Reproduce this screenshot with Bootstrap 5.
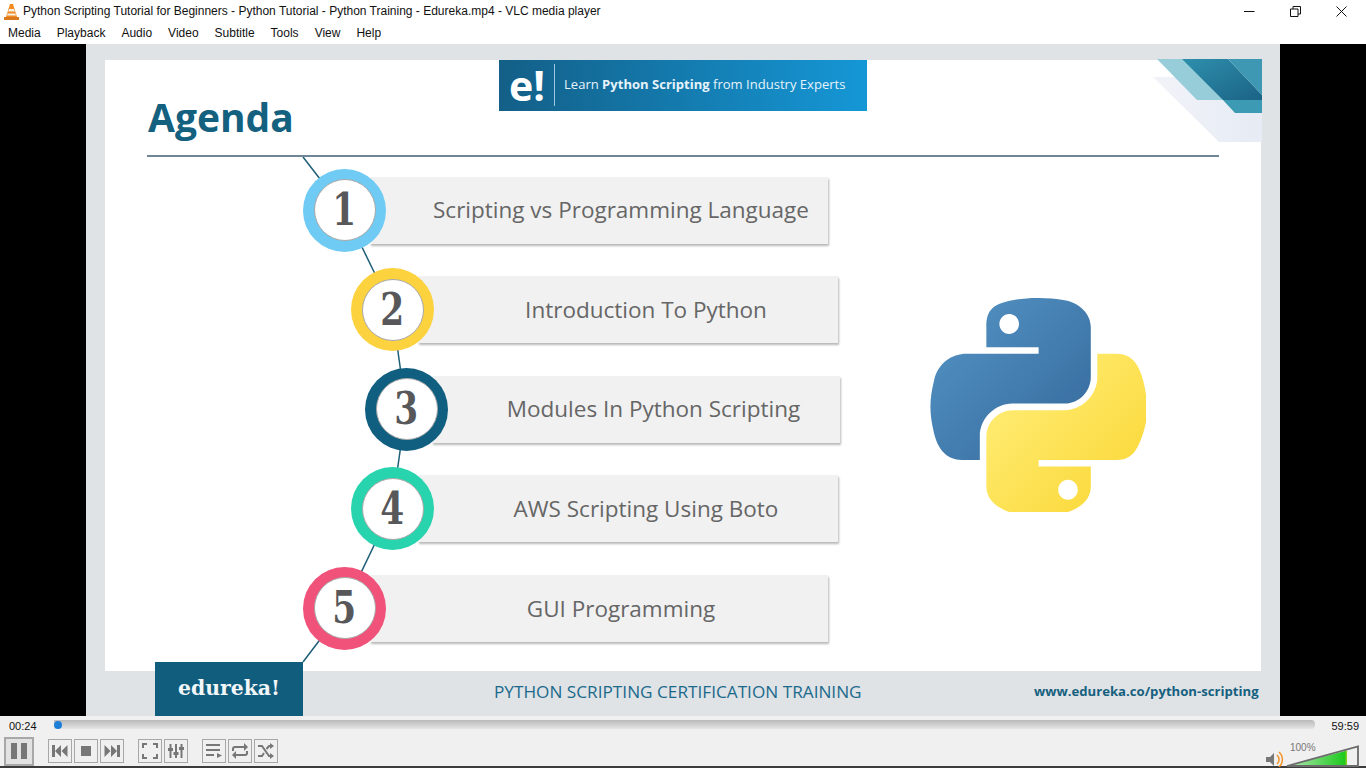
<!DOCTYPE html>
<html lang="en">
<head>
<meta charset="UTF-8">
<title>VLC media player</title>
<link href="https://cdn.jsdelivr.net/npm/bootstrap@5.3.0/dist/css/bootstrap.min.css" rel="stylesheet">
<style>
html,body{width:1366px;height:768px;overflow:hidden;background:#f0f0f0;font-family:"Open Sans",sans-serif}
.titlebar{height:23px;background:#fff;font:12px/23px "Liberation Sans",Arial,sans-serif;color:#111;padding-left:3px}
.titlebar-text{margin-left:3px}
.win-btns{gap:35px;padding-right:19px}
.menubar{height:21px;background:#fff;font:12px/21px "Liberation Sans",Arial,sans-serif;color:#111;padding-left:8px;gap:16px}
.stage{height:672px;background:#000}
.slide{margin-left:86px;width:1194px;height:672px;background:#dfe3e6;padding:16px 0 0 19px}
.paper{width:1156px;height:611px;background:#fff}
.corner{position:absolute;left:1048px;top:-1px}
.head-row{height:95px;padding-left:43px}
.agenda-title{width:351px;margin:32px 0 0;font:700 39px/50px "Open Sans",sans-serif;color:#14607f}
.promo{width:368px;height:51px;background:linear-gradient(90deg,#135f87,#1597d6);color:#fff;padding:0 0 1px 10px}
.promo-e{font:700 41px/50px "Open Sans",sans-serif;width:45px}
.promo-sep{width:1px;height:42px;background:#9cc8e0;margin-right:9px}
.promo-text{font-size:13.06px;color:#e6f3fb}
.rule{height:2px;margin:0 42px;background:#6f8696}
.links{position:absolute;left:0;top:0}
.agenda{width:735px;padding-top:11.500px;gap:16.600px}
.agenda-row{height:83px}
.at-1{margin-left:198px}
.at-2{margin-left:246px}
.at-3{margin-left:260px}
.ring{width:83px;height:83px;border-radius:50%;flex:none;z-index:2;position:relative}
.ring-1{background:#6fcbf3}
.ring-2{background:#fcd23f}
.ring-3{background:#115f80}
.ring-4{background:#27d4ae}
.ring-5{background:#f0527a}
.ring-in{width:62px;height:62px;border-radius:50%;background:#fff;border:1px solid #a8a8a8;font:700 44px/1 "DejaVu Serif",serif;color:#58585a}
.digit{display:inline-block;transform:scaleX(.78)}
.agenda-box{height:67px;margin-left:-16px;background:#f1f1f1;box-shadow:1px 2px 2px #b9b9b9;font-size:22.500px;color:#666;padding-left:44px;z-index:1;position:relative}
.w-1{width:458px}
.w-2{width:420px;padding-left:36px}
.w-3{width:410px;padding-left:35px}
.py-logo{margin:141px 0 0 90px}
.slide-foot{height:45px}
.brand{width:148px;height:54px;margin:-9px 0 0 50px;background:#115d7e;color:#f1f6f8;font:700 20.400px/1 "DejaVu Serif",serif;z-index:3;position:relative;padding-bottom:2px}
.foot-title{margin:0 0 4px 191px;font-size:17.200px;color:#1b6a8c;width:540px}
.foot-url{margin-bottom:4px;font-size:13.150px;font-weight:700;color:#15607f}
.controls{height:52px;position:relative;background:#f0f0f0;border-bottom:2px solid #3c3c3c}
.time-row{height:20px;padding:0 7px 0 9px;font:11px/1 "Liberation Sans",Arial,sans-serif;color:#111}
.seek{position:relative;margin:0 16px 3px 17px;height:9px;border-radius:0 4px 4px 0;background:linear-gradient(#b9b9b9,#e4e4e4)}
.seek-dot{position:absolute;left:0;top:1px;width:8px;height:8px;border-radius:50%;background:#1e7fd8}
.btn-row{padding-left:4px;height:30px}
.vbtn{width:24px;height:24px;padding:0;border:1px solid #a8a8a8;border-radius:0;background:#f0f0f0;display:flex;align-items:center;justify-content:center}
.vbtn-main{width:30px;height:29px;margin-right:14px;background:#e2e2e2;border-width:2px}
.tight{margin-right:2px}
.gap-after{margin-right:14px}
.vol{margin:4px 7px 0 auto;width:96px;height:24px;position:relative}
.vol-pct{position:absolute;left:27px;top:2px;font:10px/1 "Liberation Sans",Arial,sans-serif;color:#777}
</style>
</head>
<body>
<div class="titlebar d-flex align-items-center">
  <svg width="17" height="19" viewBox="0 0 17 19"><path d="M7 2h3l4 13H3z" fill="#f58a1f"/><path d="M6 7h5l.8 2.500H5.200zM4.600 11.500h7.800l.6 2H4z" fill="#f4f0ea"/><path d="M1 15h15v3H1z" fill="#d9781c"/></svg>
  <span class="titlebar-text flex-grow-1">Python Scripting Tutorial for Beginners - Python Tutorial - Python Training - Edureka.mp4 - VLC media player</span>
  <div class="d-flex align-items-center win-btns">
    <svg width="11" height="11" viewBox="0 0 11 11"><path d="M0 5.500h10.500" stroke="#111" fill="none"/></svg>
    <svg width="11" height="11" viewBox="0 0 11 11"><path d="M.5 3h7.500v7.500H.5zM3 3V.5h7.500V8H8" stroke="#111" fill="none"/></svg>
    <svg width="11" height="11" viewBox="0 0 11 11"><path d="M.5.500l10 10M10.500.500l-10 10" stroke="#111" fill="none"/></svg>
  </div>
</div>
<div class="menubar d-flex"><span>Media</span><span>Playback</span><span>Audio</span><span>Video</span><span>Subtitle</span><span>Tools</span><span>View</span><span>Help</span></div>

<div class="stage">
  <div class="slide d-flex flex-column">
    <div class="paper position-relative">
      <svg class="links" width="1156" height="611">
        <polyline points="198,97 239,150 287,249 301,349 287,448 239,548 198,602" fill="none" stroke="#1f5f78" stroke-width="1.500"/>
      </svg>
      <svg class="corner" width="110" height="84" viewBox="0 0 110 84">
        <defs>
          <linearGradient id="cornerDark" x1="0" y1="0" x2="1" y2="1"><stop offset="0" stop-color="#2e8fac"/><stop offset="1" stop-color="#1b6386"/></linearGradient>
          <linearGradient id="cornerPale" x1="0" y1="0" x2="1" y2="0"><stop offset="0" stop-color="#f1f3f8"/><stop offset="1" stop-color="#e6ebf4"/></linearGradient>
        </defs>
        <path d="M0 18H109V83H66z" fill="url(#cornerPale)"/>
        <path d="M4 0H30L78 41H44z" fill="#97cdd9"/>
        <path d="M70 41H109V54H82z" fill="#3c9ab4"/>
        <path d="M29 0H75L109 36V41H70z" fill="url(#cornerDark)"/>
        <path d="M75 0H109V36z" fill="#3f98b3"/>
      </svg>
      <div class="head-row d-flex position-relative">
        <h1 class="agenda-title">Agenda</h1>
        <div class="promo d-flex align-items-center">
          <span class="promo-e">e!</span><span class="promo-sep"></span>
          <span class="promo-text">Learn <b>Python Scripting</b> from Industry Experts</span>
        </div>
      </div>
      <div class="rule position-relative"></div>
      <div class="d-flex position-relative">
        <div class="agenda d-flex flex-column">
          <div class="agenda-row d-flex align-items-center at-1">
            <div class="ring ring-1 d-flex align-items-center justify-content-center"><div class="ring-in d-flex align-items-center justify-content-center"><span class="digit">1</span></div></div>
            <div class="agenda-box w-1 d-flex align-items-center justify-content-center">Scripting vs Programming Language</div>
          </div>
          <div class="agenda-row d-flex align-items-center at-2">
            <div class="ring ring-2 d-flex align-items-center justify-content-center"><div class="ring-in d-flex align-items-center justify-content-center"><span class="digit">2</span></div></div>
            <div class="agenda-box w-2 d-flex align-items-center justify-content-center">Introduction To Python</div>
          </div>
          <div class="agenda-row d-flex align-items-center at-3">
            <div class="ring ring-3 d-flex align-items-center justify-content-center"><div class="ring-in d-flex align-items-center justify-content-center"><span class="digit">3</span></div></div>
            <div class="agenda-box w-3 d-flex align-items-center justify-content-center">Modules In Python Scripting</div>
          </div>
          <div class="agenda-row d-flex align-items-center at-2">
            <div class="ring ring-4 d-flex align-items-center justify-content-center"><div class="ring-in d-flex align-items-center justify-content-center"><span class="digit">4</span></div></div>
            <div class="agenda-box w-2 d-flex align-items-center justify-content-center">AWS Scripting Using Boto</div>
          </div>
          <div class="agenda-row d-flex align-items-center at-1">
            <div class="ring ring-5 d-flex align-items-center justify-content-center"><div class="ring-in d-flex align-items-center justify-content-center"><span class="digit">5</span></div></div>
            <div class="agenda-box w-1 d-flex align-items-center justify-content-center">GUI Programming</div>
          </div>
        </div>
        <svg class="py-logo" width="216" height="214" viewBox="0 0 110.400 109.800">
          <defs>
            <linearGradient id="pyBlue" x1="0" y1="0" x2="1" y2="1"><stop offset="0" stop-color="#5596c6"/><stop offset="1" stop-color="#34679a"/></linearGradient>
            <linearGradient id="pyYellow" x1="0" y1="0" x2="1" y2="1"><stop offset="0" stop-color="#fff07f"/><stop offset="1" stop-color="#fbd52f"/></linearGradient>
          </defs>
          <path fill="url(#pyBlue)" d="M54.919 0C50.335.022 45.958.413 42.106 1.095 30.760 3.099 28.700 7.295 28.700 15.032v10.219h26.813v3.406H18.637c-7.792 0-14.616 4.684-16.750 13.594-2.462 10.213-2.571 16.586 0 27.250 1.906 7.938 6.458 13.594 14.250 13.594h9.219v-12.250c0-8.850 7.657-16.656 16.750-16.656h26.781c7.455 0 13.406-6.138 13.406-13.625V15.032c0-7.266-6.130-12.725-13.406-13.937C64.282.328 59.502-.020 54.919 0zm-14.500 8.220c2.770 0 5.031 2.299 5.031 5.125 0 2.816-2.261 5.094-5.031 5.094-2.779 0-5.031-2.278-5.031-5.094 0-2.826 2.252-5.125 5.031-5.125z"/>
          <path fill="url(#pyYellow)" d="M85.638 28.657v11.906c0 9.231-7.826 17-16.750 17H42.107c-7.336 0-13.406 6.278-13.406 13.625v25.531c0 7.266 6.319 11.540 13.406 13.625 8.487 2.496 16.626 2.947 26.781 0 6.750-1.954 13.406-5.888 13.406-13.625V86.501H55.513v-3.406h40.187c7.792 0 10.696-5.435 13.406-13.594 2.799-8.399 2.740-16.476 0-27.250-1.926-7.757-5.604-13.594-13.406-13.594zM70.575 93.313c2.779 0 5.031 2.277 5.031 5.094 0 2.826-2.252 5.125-5.031 5.125-2.770 0-5.031-2.299-5.031-5.125 0-2.817 2.261-5.094 5.031-5.094z"/>
        </svg>
      </div>
    </div>
    <div class="slide-foot d-flex align-items-center">
      <div class="brand d-flex align-items-center justify-content-center">edureka!</div>
      <div class="foot-title">PYTHON SCRIPTING CERTIFICATION TRAINING</div>
      <div class="foot-url">www.edureka.co/python-scripting</div>
    </div>
  </div>
</div>

<div class="controls">
  <div class="time-row d-flex align-items-center">
    <span>00:24</span>
    <div class="seek flex-grow-1"><div class="seek-dot"></div></div>
    <span>59:59</span>
  </div>
  <div class="btn-row d-flex align-items-center">
    <button class="btn vbtn vbtn-main"><svg width="18" height="18" viewBox="0 0 18 18"><path d="M1 1h6v16H1zM11 1h6v16h-6z" fill="#777"/></svg></button>
    <button class="btn vbtn tight"><svg width="16" height="12" viewBox="0 0 16 12"><path d="M0 0h3v12H0zM9 0v12L3 6zM15.500 0v12L9.500 6z" fill="#777"/></svg></button>
    <button class="btn vbtn tight"><svg width="12" height="12" viewBox="0 0 12 12"><path d="M1 1h10v10H1z" fill="#777"/></svg></button>
    <button class="btn vbtn gap-after"><svg width="16" height="12" viewBox="0 0 16 12"><path d="M16 0h-3v12h3zM7 0v12l6-6zM.5 0v12l6-6z" fill="#777"/></svg></button>
    <button class="btn vbtn tight"><svg width="16" height="16" viewBox="0 0 16 16"><path d="M1 5V1h4M11 1h4v4M15 11v4h-4M5 15H1v-4" stroke="#777" stroke-width="2" fill="none"/></svg></button>
    <button class="btn vbtn gap-after"><svg width="18" height="16" viewBox="0 0 18 16"><path d="M3.500 1v14M9 1v14M14.500 1v14" stroke="#777" stroke-width="2"/><path d="M1 5h5v3H1zM6.500 9h5v3h-5zM12 4h5v3h-5z" fill="#777"/></svg></button>
    <button class="btn vbtn tight"><svg width="18" height="16" viewBox="0 0 18 16"><path d="M1 2h14M1 7h14M1 12h8" stroke="#777" stroke-width="2"/><path d="M12 10v5l5-2.500z" fill="#777"/></svg></button>
    <button class="btn vbtn tight"><svg width="18" height="16" viewBox="0 0 18 16"><path d="M2 8V6a2 2 0 0 1 2-2h10M16 8v2a2 2 0 0 1-2 2H4" stroke="#777" stroke-width="2" fill="none"/><path d="M13 0v8l4-4zM5 8v8l-4-4z" fill="#777"/></svg></button>
    <button class="btn vbtn"><svg width="18" height="16" viewBox="0 0 18 16"><path d="M1 3h4l7 10h2M1 13h4l2-3M9.500 6L12 3h2" stroke="#777" stroke-width="2" fill="none"/><path d="M13 0v6l4-3zM13 10v6l4-3z" fill="#777"/></svg></button>
    <div class="vol">
      <span class="vol-pct">100%</span>
      <svg width="96" height="24" viewBox="0 0 96 24">
        <defs><linearGradient id="volFill"><stop offset="0" stop-color="#b4e8b4"/><stop offset=".96" stop-color="#1fc91f"/><stop offset="1" stop-color="#9fce1e"/></linearGradient></defs>
        <path d="M3 14h4l4-4v13l-4-4H3z" fill="#777"/>
        <path d="M14 12a6 6 0 0 1 0 9M16 9a10 10 0 0 1 0 15" stroke="#f2932a" stroke-width="1.500" fill="none"/>
        <path d="M25 23L84 7.500V23z" fill="url(#volFill)"/>
        <path d="M24 23L95 3.500V23z" fill="none" stroke="#6b6b6b" stroke-width="1.800"/>
      </svg>
    </div>
  </div>
</div>
</body>
</html>
